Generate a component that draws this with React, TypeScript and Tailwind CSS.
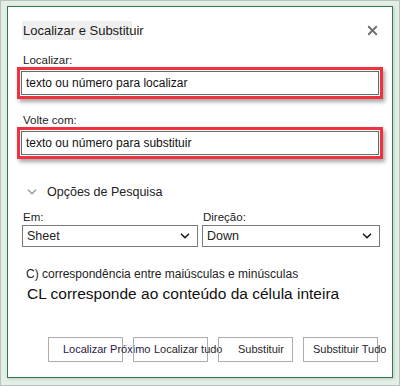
import { ChevronDown, X } from 'lucide-react';

const font = { fontFamily: '"Liberation Sans", Arial, sans-serif' };

function FieldBox({ value }: { value: string }) {
    return (
        <div className="ml-[9px] w-[366px] border-[3px] border-[#f0323f] p-px shadow-[2px_3px_4px_rgba(0,0,0,0.35)]">
            <div className="h-6 border border-[#6b6b6b] bg-white pl-[4px] flex items-center text-[12px] text-[#111]">
                {value}
            </div>
        </div>
    );
}

function Select({ value, width }: { value: string; width: string }) {
    return (
        <div className={`${width} h-[22px] border border-[#7a7a7a] bg-white flex items-center justify-between pl-[4px] pr-[5px]`}>
            <span className="text-[12.5px] text-[#222]">{value}</span>
            <ChevronDown size={14} strokeWidth={3} className="text-[#222]" />
        </div>
    );
}

export default function App() {
    return (
        <div className="w-[400px] h-[386px] bg-[#e3eee7] border border-[#b7c2bb] overflow-hidden" style={font}>
            <div className="ml-[6px] mt-[5px] w-[386px] h-[372px] bg-white border border-[#317a4c] shadow-[1px_1px_3px_rgba(0,0,0,0.15)] flex flex-col">
                <div className="mt-[14px] ml-[14px] mr-[12px] flex items-center justify-between">
                    <div className="h-[19px] pl-px flex items-center text-[13px] text-[#1b1b1b] bg-[linear-gradient(to_right,#efefef_110px,transparent_110px)]">
                        Localizar e Substituir
                    </div>
                    <X size={15} strokeWidth={3} className="text-[#6f6f6f]" />
                </div>

                <div className="mt-[13px] ml-[15px] h-[14px] leading-[14px] text-[11.5px] text-[#222]">Localizar:</div>
                <FieldBox value="texto ou número para localizar" />

                <div className="mt-[14px] ml-[15px] h-[14px] leading-[14px] text-[11.5px] text-[#222]">Volte com:</div>
                <FieldBox value="texto ou número para substituir" />

                <div className="mt-[24px] ml-[17px] h-[18px] flex items-center gap-[8px]">
                    <ChevronDown size={14} strokeWidth={3} className="text-[#a3a3a3]" />
                    <span className="text-[12.5px] text-[#222]">Opções de Pesquisa</span>
                </div>

                <div className="mt-[9px] ml-[14px] flex gap-[4px]">
                    <div className="flex flex-col gap-px">
                        <span className="ml-px h-[14px] leading-[14px] text-[11.5px] text-[#222]">Em:</span>
                        <Select value="Sheet" width="w-[176px]" />
                    </div>
                    <div className="flex flex-col gap-px">
                        <span className="ml-px h-[14px] leading-[14px] text-[11.5px] text-[#222]">Direção:</span>
                        <Select value="Down" width="w-[178px]" />
                    </div>
                </div>

                <div className="mt-[19px] ml-[18px] h-4 leading-4 text-[12px] text-[#222]">
                    C) correspondência entre maiúsculas e minúsculas
                </div>
                <div className="mt-[2px] ml-[19px] h-5 leading-5 text-[15.5px] text-[#111]">
                    CL corresponde ao conteúdo da célula inteira
                </div>

                <div className="mt-[33px] ml-[40px] flex gap-[10px]">
                    <button className="w-[75px] h-[25px] border border-[#adadad] bg-transparent pl-[14px] text-left whitespace-nowrap overflow-visible text-[11px] text-[#2a1840]">
                        Localizar Próximo
                    </button>
                    <button className="w-[75px] h-[25px] border border-[#adadad] bg-transparent pl-[20px] text-left whitespace-nowrap overflow-visible text-[11px] text-[#1f1f1f]">
                        Localizar tudo
                    </button>
                    <button className="w-[75px] h-[25px] border border-[#adadad] bg-transparent pl-[19px] text-left whitespace-nowrap overflow-visible text-[11px] text-[#1f1f1f]">
                        Substituir
                    </button>
                    <button className="w-[75px] h-[25px] border border-[#adadad] bg-transparent pl-[9px] text-left whitespace-nowrap overflow-visible text-[11px] text-[#1f1f1f]">
                        Substituir Tudo
                    </button>
                </div>
            </div>
        </div>
    );
}
